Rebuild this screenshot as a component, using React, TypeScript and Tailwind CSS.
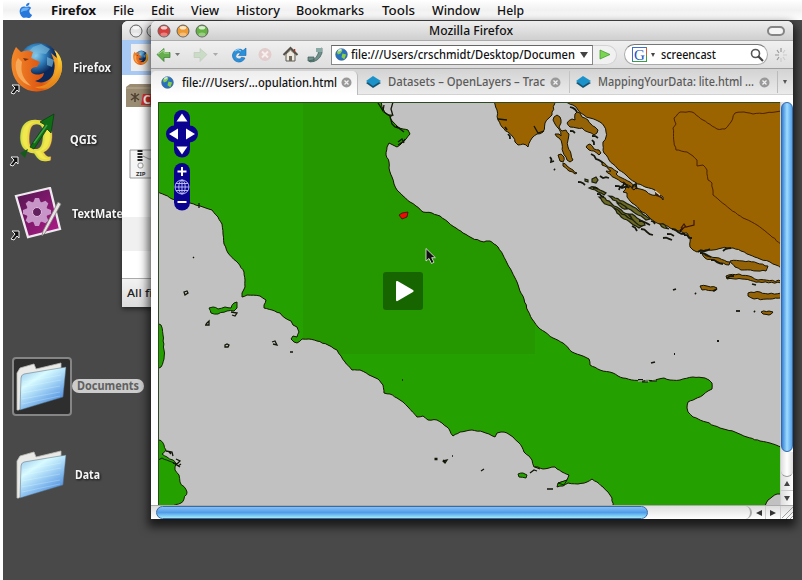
import React from "react";

type Pt = [number, number];

function rng(seed: number) {
  let s = seed;
  return () => {
    s = (s * 16807) % 2147483647;
    return s / 2147483647;
  };
}

function parse(s: string): Pt[] {
  return s.trim().split(/\s+/).map((p) => p.split(",").map(Number) as Pt);
}

// Breaks each segment into short steps with a small sideways offset, like a surveyed coastline.
function coast(s: string, amp = 0.7, closed = true): string {
  const pts = parse(s);
  const rand = rng(pts.length * 977 + Math.round(pts[0][0]));
  const out: string[] = [];
  const n = closed ? pts.length : pts.length - 1;
  for (let i = 0; i < n; i++) {
    const a = pts[i];
    const b = pts[(i + 1) % pts.length];
    const len = Math.hypot(b[0] - a[0], b[1] - a[1]);
    const straight = (a[1] >= 506 && b[1] >= 506) || (a[0] <= 157 && b[0] <= 157) || (a[1] <= 101 && b[1] <= 101) || (a[0] >= 781 && b[0] >= 781);
    const steps = straight ? 1 : Math.max(1, Math.round(len / 3));
    for (let k = 0; k < steps; k++) {
      const t = k / steps;
      const d = k === 0 ? 0 : (rand() - 0.5) * 2 * amp;
      const x = a[0] + (b[0] - a[0]) * t - ((b[1] - a[1]) / (len || 1)) * d;
      const y = a[1] + (b[1] - a[1]) * t + ((b[0] - a[0]) / (len || 1)) * d;
      out.push(`${x.toFixed(1)},${y.toFixed(1)}`);
    }
  }
  if (!closed) out.push(pts[pts.length - 1].join(","));
  return "M" + out.join("L") + (closed ? "Z" : "");
}

const ITALY = `157,192 165,195 172,199 190,203 200,206 212,210 218,217 222,224 223,234 224,244 228,253 238,263 244,272 245,280 245,287 242,293 242,297 247,295 260,296 266,300 264,305 264,308 272,310 280,313 285,318 291,321 293,325 297,327 299,332 297,337 293,336 291,339 294,342 297,343 302,339 309,339 317,341 328,345 337,350 341,356 345,362 352,370 360,370 369,375 378,379 383,385 384,393 390,394 397,398 403,402 408,407 417,417 423,416 428,420 437,420 442,423 447,427 450,431 453,436 460,432 472,430 483,432 489,434 495,437 497,433 501,432 507,433 513,437 518,442 522,447 524,452 529,456 532,460 534,467 538,467 543,469 549,468 555,467 562,472 569,475 567,480 562,482 558,483 557,487 563,486 568,483 578,484 587,482 592,479 597,482 603,487 608,492 612,498 613,506 765,506 768,500 772,497 777,494 781,494 781,447 770,443 760,441 747,437 735,432 720,428 706,422 693,417 688,412 687,408 688,402 695,399 703,395 708,391 712,389 712,383 709,380 705,378 693,377 680,380 670,380 664,378 655,380 640,381 623,378 618,376 613,373 600,370 590,365 589,359 580,355 572,352 563,343 553,338 545,332 538,327 532,319 528,311 524,299 519,288 517,282 512,272 507,263 503,255 498,247 494,244 490,241 486,241 484,242 480,241 472,238 463,233 456,228 448,222 440,216 432,213 423,212 416,206 410,202 403,196 397,190 394,184 392,177 389,168 389,162 386,155 387,147 389,143 393,145 397,147 402,143 406,139 410,134 408,130 403,129 398,127 393,122 390,118 392,115 388,115 385,113 382,107 381,101 157,101`;
const BALKANS = `563,101 568,103 573,105 578,110 584,115 590,118 596,120 600,122 604,126 606,132 606,137 603,142 604,153 609,160 617,168 626,175 635,182 645,187 655,190 656,194 660,195 663,197 663,200 659,196 652,195 646,191 640,189 633,189 631,186 626,187 623,192 627,193 627,197 632,203 642,212 648,216 655,222 663,225 670,228 679,231 687,233 690,238 690,247 693,250 697,252 705,250 713,250 722,248 733,248 741,251 750,255 760,259 770,262 776,265 781,268 781,101`;
const ISTRIA = `493,101 497,110 498,120 502,127 508,132 513,137 515,142 518,145 523,144 528,147 532,138 537,134 543,132 545,123 549,118 552,115 555,101`;
const BORDER = `781,244 770,235 757,225 743,218 730,209 713,195 712,183 708,180 707,170 703,165 697,166 697,160 693,156 687,152 676,150 674,142 673,128 676,124 674,118 680,112 692,112 703,120 717,129 725,129 731,122 735,113 744,112 753,114 766,113 781,111`;
const CROATIA_ISLANDS = [
  "554,117 557,115 560,117 561,123 559,127 562,131 566,130 569,134 568,140 568,147 571,154 573,160 570,162 567,160 563,152 562,144 559,138 555,134 559,134 561,136 559,129 555,124 553,120",
  "567,123 572,119 575,120 575,114 577,112 580,113 582,117 588,120 591,124 595,127 598,130 597,133 594,135 588,132 582,128 577,128 570,127",
  "586,147 590,144 594,149 599,150 601,153 599,155 594,151 589,150",
  "602,162 606,165 612,168 618,172 616,174 622,178 630,182 637,187 634,190 628,185 621,182 615,178 610,174 606,171 611,171 607,167 602,165",
  "558,155 561,154 564,157 563,162 560,161 559,158",
  "563,163 567,166 573,170 577,173 575,174 569,171 563,166",
  "730,261 743,261 757,263 768,266 766,271 757,271 741,270 735,267",
  "726,276 739,274 752,277 758,280 781,281 781,283 759,282 742,279 727,279",
  "748,293 760,292 768,294 781,293 781,298 767,299 754,299 748,296",
  "700,286 707,286 717,288 715,291 702,290",
  "700,252 707,256 719,258 730,262 729,265 718,262 705,258",
  "761,312 769,311 773,312 769,315 763,314",
];
const SMALL_ISLANDS = [
  "592,179 596,177 598,180 596,183 592,182", "585,179 588,180 588,182 585,181",
  "599,197 605,198 611,203 617,207 623,212 628,214 632,218 629,219 623,215 616,210 608,205 602,201",
  "609,196 615,198 623,201 630,205 638,210 646,216 650,219 646,220 638,215 631,210 622,205 613,200",
  "614,208 620,212 627,217 633,220 638,222 642,226 639,228 631,223 624,219 617,213",
  "629,214 635,216 642,221 645,225 641,226 634,221", "617,203 623,205 627,209 622,208",
  "589,188 595,187 600,190 606,193 604,195 598,192", "660,224 665,225 669,229 664,228",
];
const SLIVERS = [
  "570,107 577,112", "592,136 598,138", "592,140 594,145", "591,154 596,159 603,163",
  "570,131 575,133", "578,182 585,185", "550,157 551,162 554,161",
  "554,169 555,170", "593,188 598,189", "597,194 604,197", "615,186 622,188 628,186", "619,190 624,183 629,188", "632,188 636,184 637,189",
  "600,176 603,178 609,178", "632,226 637,231", "641,229 647,232 653,235", "639,221 650,225", "651,221 655,224",
  "663,238 672,240", "667,234 674,236", "672,229 678,232 685,234", "684,235 692,238", "680,231 683,228", "700,253 711,257",
  "711,260 723,264", "727,278 734,276", "673,290 676,289", "695,293 696,294",
  "717,289 713,291", "736,311 740,311", "754,311 755,312", "717,341 719,341", "674,354 675,354", "651,363 655,362",
  "752,284 756,285", "508,134 510,139", "505,127 507,130", "698,252 710,249", "723,251 731,248",
];

function MapView() {
  return (
    <svg className="block h-[403px] w-[622px] shrink-0" viewBox="158 102 622 403">
      <defs><clipPath id="italy"><path d={coast(ITALY, 0.45)} /></clipPath></defs>
      <rect x="158" y="102" width="622" height="403" fill="#c1c1c1" />
      <g stroke="#171400" strokeWidth="1" strokeLinejoin="round">
        <path d={coast(ITALY, 0.45)} fill="#24a000" stroke="none" />
        <path d="M303 102H535V354H303Z" fill="#269600" fillOpacity=".75" stroke="none" clipPath="url(#italy)" />
        <path d={coast(ITALY, 0.45)} fill="none" />
        <path d={coast(BALKANS, 0.8)} fill="#9b6400" />
        <path d={coast(ISTRIA, 0.8)} fill="#9b6400" />
        {CROATIA_ISLANDS.map((s, i) => <path key={i} d={coast(s, 0.8)} fill="#946207" />)}
        <path d={coast(BORDER, 0.5, false)} fill="none" stroke="#4c2100" />
      </g>
      <g fill="#6d6a25" stroke="#1c200e" strokeWidth="1.2">
        {SMALL_ISLANDS.map((s, i) => <path key={i} d={coast(s, 0.9)} />)}
      </g>
      <g stroke="#17180d" strokeWidth="1.8" fill="none">
        {SLIVERS.map((s, i) => <path key={i} d={coast(s, 1, false)} />)}
      </g>
      <path d="M641 187l6 2M655 191l5 4" stroke="#d8d8d8" strokeWidth="1.2" />
      <path d="M681 228l3-4 2 3 8-2V220M681 230l5-4M655 194l7 4" fill="none" stroke="#3c1300" strokeWidth="1.2" />
      <g fill="#24a000" stroke="#122100" strokeWidth="1">
        <path d={coast("157,323 161,325 163,335 164,350 164,359 161,367 157,369", 0.6)} />
        <path d={coast("157,441 160,440 164,445 166,450 162,454 167,457 173,460 176,464 175,470 179,475 180,482 187,492 184,499 181,503 173,506 157,506", 0.8)} />
        <path d={coast("157,462 162,458 169,461 174,463", 0.7, false)} fill="none" />
        <path d={coast("209,308 213,307 218,309 225,307 231,308 234,303 237,302 237,308 234,311 227,311 218,314 211,313", 0.7)} />
        <path d={coast("518,474 523,473 527,475 526,478 519,477", 0.4)} />
        <path d="M558 483L567 480L564 485Z" />
      </g>
      <g fill="none" stroke="#111607" strokeWidth="1.3">
        <path d="M184 292l3-1 1 2-3 2zM193 257l1 1M206 324l3-3v4h-4M225 345l2-1 2 1-1 2h-3zM272 342l3-1 2 4-4-1M290 352h3M231 312l6 1-2 3-3-1M166 451l6 1 1 4M171 454l-2-2M176 459l4 2-3 3-4-1M175 464l5 3M178 466l3-2M158 309v5M443 461l4-1-2 3-2-2M452 456h1M481 471l3-2M547 489h6M530 473l4-3 3 1M199 203v5M402 380h1M535 467l5 2" />
        <path d="M434.500 459h3M443.500 462l1-2" strokeWidth="2.600" />
        <path d="M378 103l2 3 3 5 1-6M384 112l6 4 2 8 3 3 6 2M393 102l-2 7 2 7M398 145l6-4 1-2M396 126l8 6M398 142l4-3 2 4M498 119l9 1M534 126l4 7 6-2" />
      </g>
      <path d="M638 381h4M645 381h4M652 380h4" stroke="#d6d6d6" strokeWidth="1.2" />
      <path d="M638 379.5h5M642 382h6M650 381h7" stroke="#111" strokeWidth="1" />
      <path d="M399 215l3-2 6-1-1 5-5 2z" fill="#f00a05" stroke="#351000" strokeWidth=".8" />
      <path d="M158.5 505V102.5H780" fill="none" stroke="#2d4823" />
      <g fill="#09038f">
        <rect x="174" y="110" width="16" height="47.500" rx="8" />
        <rect x="166" y="125.500" width="32" height="17" rx="8.500" />
        <rect x="174" y="163" width="16" height="47.500" rx="8" />
      </g>
      <path d="M182 113.500l5.500 8h-11zM182 154.500l5.500-8h-11zM169 134l9-5.500v11zM195 134l-9-5.500v11zM177.500 170.500h3.500v-3.500h2v3.500h3.500v2H183v3.500h-2v-3.500h-3.500zM177.500 201h9v2h-9z" fill="#fff" />
      <g fill="none" stroke="#c6c7ff" strokeWidth=".9">
        <circle cx="182" cy="187" r="7" /><ellipse cx="182" cy="187" rx="3.200" ry="7" />
        <path d="M175 187h14M182 180v14M176 183.500h12M176 190.500h12" />
      </g>
      <path d="M426 248.500v12.500l3-2.500 2.500 5 2.500-1.300-2.300-4.500h3.700z" fill="#111" stroke="#ddd" strokeWidth=".9" />
      <rect x="383" y="272" width="40" height="38" rx="3" fill="#176500" />
      <path d="M396 282q0-1.500 1.500-1L413 290q1.500 1 0 2L397.500 301q-1.500.5-1.500-1z" fill="#fff" />
    </svg>
  );
}

function Alias({ className }: { className: string }) {
  return (
    <svg className={className} width="12" height="12" viewBox="0 0 12 12">
      <path d="M3 2h7v7L8 7l-3 4-3-1 4-5z" fill="#111" stroke="#eee" strokeWidth="1" />
    </svg>
  );
}

function FirefoxIcon({ size }: { size: number }) {
  return (
    <svg width={size} height={size} viewBox="0 0 54 54">
      <defs>
        <radialGradient id="globe" cx=".4" cy=".3"><stop stopColor="#94d4ee" /><stop offset=".5" stopColor="#3182bf" /><stop offset="1" stopColor="#0b2859" /></radialGradient>
        <linearGradient id="fur"><stop stopColor="#f48a29" /><stop offset=".6" stopColor="#dc5412" /><stop offset="1" stopColor="#f7c32f" /></linearGradient>
        <linearGradient id="tail" x2=".3" y2="1"><stop stopColor="#fff08a" /><stop offset=".5" stopColor="#f6c72f" /><stop offset="1" stopColor="#e78318" /></linearGradient>
      </defs>
      <circle cx="28" cy="22" r="20" fill="url(#globe)" />
      <path d="M22 6l8-3 9 5-4 5-8-1-4 4-7-3zM36 16l7 3-2 7-5-2z" fill="#78b9da" opacity=".65" />
      <path d="M5 6l5 5c4-2 8-2 12 0l-2 6 9 4-3 5c-5 0-8 3-5 6 5 3 9 1 12 0q-1 6-9 8c8 4 18-1 19-10 2-8-1-13-3-18l6 5-2-8c11 10 9 31-7 39-17 7-33-2-36-19C0 22 0 14 5 6z" fill="url(#fur)" />
      <path d="M43 9c6 8 6 22-1 29-5 5-11 8-18 8 8 4 18 0 23-7 7-10 5-24-4-30z" fill="url(#tail)" />
      <path d="M5 21c-2 10 4 21 15 24-8-7-11-14-9-24l-4-4z" fill="#f7a95a" />
      <path d="M12 17l6 1-4 2z" fill="#76330b" />
    </svg>
  );
}

function QgisIcon() {
  return (
    <svg width="48" height="54" viewBox="0 0 48 54" className="overflow-visible">
      <text x="3" y="39" fontSize="47" fontWeight="700" textLength="34" lengthAdjust="spacingAndGlyphs" transform="rotate(4 20 25)" fill="#f0e84d" stroke="#e3da43" strokeWidth="2" className="font-['Liberation_Serif']">Q</text>
      <path d="M14 34L29 12l-5-3L38 1l-3 19-4-4L18 36z" fill="#106d16" stroke="#0a3d10" strokeWidth=".8" />
      <path d="M18 30L31 12" stroke="#3fa342" strokeWidth="1.500" />
      <path d="M4 40l8-4-3 9z" fill="#145a18" />
    </svg>
  );
}

function TextMateIcon() {
  return (
    <svg width="50" height="52" viewBox="0 0 50 52">
      <defs><linearGradient id="plum" x2="1" y2="1"><stop stopColor="#4f164e" /><stop offset="1" stopColor="#b31c8b" /></linearGradient></defs>
      <path d="M2 9L36 1l10 41-32 8z" fill="url(#plum)" stroke="#eee8ef" strokeWidth="2.300" />
      <g transform="translate(23 25)" fill="#c795c7">
        {[0, 45, 90, 135, 180, 225, 270, 315].map((a) => <path key={a} d="M-4-9l2-5h4l2 5z" transform={`rotate(${a})`} />)}
        <circle r="10.500" /><circle r="4.500" fill="#63205e" stroke="#e4bbe2" />
      </g>
      <path d="M44 15l3 2-16 29-3 3 1-5z" fill="#e6e3e2" stroke="#807a7b" strokeWidth=".8" />
    </svg>
  );
}

function FolderIcon() {
  return (
    <svg width="52" height="52" viewBox="0 0 52 52">
      <defs><linearGradient id="folder" x2=".7" y2="1"><stop stopColor="#8abbe8" /><stop offset=".35" stopColor="#d8fbff" /><stop offset=".65" stopColor="#92c6f2" /><stop offset="1" stopColor="#4284db" /></linearGradient></defs>
      <path d="M1 12l3-5 14-4 2 5 25-6v8L3 49H1z" fill="#e9e9e7" stroke="#babab8" strokeWidth=".8" />
      <path d="M5 17q0-3 3-4L50 6l-3 30L4 49z" fill="url(#folder)" stroke="#536774" strokeWidth=".5" />
      <path d="M7 21l38-7M7 26l38-7M6 32l38-7M6 38l38-7M6 43l38-8" stroke="#ebffff" opacity=".25" />
    </svg>
  );
}

function Globe() {
  return (
    <svg width="13" height="13" viewBox="0 0 14 14" className="shrink-0">
      <circle cx="7" cy="7" r="6.300" fill="#2872bd" stroke="#496683" strokeWidth=".7" />
      <path d="M2 4l4-3 2 2-2 3-3 1zM8 6l4 1-2 5-3-2z" fill="#8bcf45" /><path d="M3 2l3-1 2 1-4 2z" fill="#c7e9f6" />
    </svg>
  );
}

function Trac() {
  return (
    <svg width="15" height="13" viewBox="0 0 15 13" className="shrink-0">
      <path d="M0 7l7-4 8 4-8 5z" fill="#17516f" /><path d="M0 5l7-5 8 5-8 5z" fill="#1b93ca" />
    </svg>
  );
}

function CloseTab() {
  return (
    <svg width="11" height="11" viewBox="0 0 11 11" className="shrink-0"><circle cx="5.500" cy="5.500" r="5" fill="#999" /><path d="M3.500 3.500l4 4m0-4l-4 4" stroke="#f2f2f2" strokeWidth="1.300" /></svg>
  );
}

function Light({ color }: { color: string }) {
  return (
    <svg width="14" height="14" viewBox="0 0 14 14" className="block">
      <circle cx="7" cy="7" r="6" fill={color} stroke="#606060" strokeWidth="1" />
      <ellipse cx="7" cy="3.700" rx="3.300" ry="1.800" fill="#fff" opacity=".75" /><ellipse cx="7" cy="10.500" rx="3.500" ry="2" fill="#fff" opacity=".35" />
    </svg>
  );
}

// Keeps a label at its own column width, whatever the font's advance widths.
function Label({ text, width, size, bold, color = "#111", shadow }: { text: string; width: number; size: number; bold?: boolean; color?: string; shadow?: boolean }) {
  return (
    <svg width={width} height="18" className={shadow ? "block shrink-0 overflow-visible drop-shadow-[1px_1px_1px_#111]" : "block shrink-0 overflow-visible"}>
      <text x="0" y="13" textLength={width} lengthAdjust="spacingAndGlyphs" fontSize={size} fontWeight={bold ? 700 : 500} fill={color} className="font-['Noto_Sans','Open_Sans',sans-serif]">{text}</text>
    </svg>
  );
}

const MENU: [string, number, number][] = [["Firefox", 45, 62], ["File", 21, 38], ["Edit", 23, 40], ["View", 28, 45], ["History", 44, 60], ["Bookmarks", 68, 86], ["Tools", 33, 50], ["Window", 48, 65], ["Help", 27, 40]];

function Toolbar() {
  return (
    <div className="flex h-[28px] shrink-0 items-center border-t border-[#ababab] bg-gradient-to-b from-[#f0f0f0] to-[#dedede]">
      <svg width="180" height="27" viewBox="151 41 180 27" className="shrink-0">
        <path d="M157 54.500l7-6v4h6v5h-6v4z" fill="#65ae4d" stroke="#35782d" strokeWidth=".7" /><path d="M158 54l6-4v3h5" fill="none" stroke="#b0df99" />
        <path d="M175 53h5l-2.500 3z" fill="#777" /><path d="M213 53h5l-2.500 3z" fill="#aaa" />
        <path d="M207 54.500l-7-6v4h-6v5h6v4z" fill="#cbdcc6" stroke="#b4c2b0" strokeWidth=".5" />
        <path d="M243 50.500a6.500 6.500 0 1 0 2 7.500l-3.500-.8a3 3 0 1 1-1-3.700l-2 2h7.500V48z" fill="#2991dc" stroke="#1b64a9" strokeWidth=".6" />
        <path d="M235 51q3-3 6 0" stroke="#9bdcff" fill="none" />
        <circle cx="265" cy="54.500" r="6.500" fill="#e2cccc" /><path d="M262 51.500l6 6m0-6l-6 6" stroke="#f7eeee" strokeWidth="2" />
        <path d="M283.500 55l7-7 7 7" fill="none" stroke="#565048" strokeWidth="2" /><path d="M286 54l4.500-4 4.500 4v7h-9z" fill="#eeeadf" stroke="#615d54" /><path d="M289 56h3v5h-3z" fill="#70685a" /><path d="M294.500 49v3" stroke="#983c2d" strokeWidth="1.500" />
        <path d="M309 61q9-1 10-12l3-1v5q-3 9-12 9zM308 57h6v4h-6z" fill="#70908b" stroke="#3e5d58" strokeWidth=".7" /><path d="M316 48h6v4h-6z" fill="#8aaba5" />
      </svg>
      <div className="flex h-[20px] w-[262px] shrink-0 items-center border border-[#888] border-t-[#666] bg-white pl-[3px]">
        <Globe /><div className="w-[3px] shrink-0" />
        <Label text="file:///Users/crschmidt/Desktop/Documen" width={224} size={12} />
        <span className="ml-[5px] h-0 w-0 shrink-0 border-x-4 border-t-[6px] border-x-transparent border-t-[#444]" />
      </div>
      <div className="flex h-[20px] w-[24px] shrink-0 items-center justify-center rounded-r-full border border-l-0 border-[#d3d3d3] bg-[#f1f1f1]">
        <svg width="12" height="11" viewBox="0 0 12 11"><path d="M1 1l10 4.500L1 10z" fill="#7bd552" stroke="#369425" strokeWidth=".7" /></svg>
      </div>
      <div className="ml-[7px] flex h-[21px] w-[144px] shrink-0 items-center rounded-full border border-[#aaa] border-t-[#777] bg-white pl-[7px]">
        <svg width="15" height="15" viewBox="0 0 15 15" className="shrink-0"><rect x=".5" y=".5" width="14" height="14" fill="#fff" stroke="#36a042" /><path d="M.5 14V.5H14" fill="none" stroke="#426ccd" /><path d="M14.500 1v7" stroke="#dd5336" /><text x="2" y="12.500" fontSize="15" fill="#2154c3" className="font-['Liberation_Serif']">G</text></svg>
        <span className="mx-[4px] h-0 w-0 border-x-2 border-t-4 border-x-transparent border-t-[#444]" />
        <div className="w-[2px]" />
        <Label text="screencast" width={55} size={12} />
        <svg width="14" height="14" viewBox="0 0 14 14" className="ml-[34px] shrink-0"><circle cx="5.500" cy="5.500" r="4" fill="none" stroke="#555" strokeWidth="1.600" /><path d="M8 8l5 5" stroke="#444" strokeWidth="2.200" /></svg>
      </div>
      <svg width="18" height="20" viewBox="0 0 18 20" className="ml-[4px] shrink-0"><path d="M9 3v4M5 5l2 3M3 10h4M5 15l2-3" stroke="#999" strokeWidth="1.200" /><path d="M9 17v-4M13 15l-2-3M13 5l-2 3M15 10h-4" stroke="#ccc" strokeWidth="1.200" /></svg>
    </div>
  );
}

function Browser() {
  return (
    <section className="absolute left-[148px] top-[21px] flex h-[498px] w-[642px] flex-col overflow-hidden rounded-t-[6px] bg-white shadow-[0_5px_10px_3px_rgba(0,0,0,.65)]">
      <div className="flex h-[19px] shrink-0 items-center bg-gradient-to-b from-[#eeeeee] to-[#cfcfcf] pl-[6px]">
        <div className="flex gap-[5px]"><Light color="#d73e3b" /><Light color="#ee9a32" /><Light color="#63b342" /></div>
        <div className="ml-[220px]"><Label text="Mozilla Firefox" width={84} size={12} /></div>
        <div className="ml-auto mr-[8px] h-[10px] w-[18px] rounded-full border-2 border-[#858585] bg-[#f4f4f4]" />
      </div>
      <Toolbar />
      <div className="flex h-[27px] shrink-0 items-center border-y border-t-[#9d9d9d] border-b-[#d2d2d2] bg-gradient-to-b from-[#d3d3d3] to-[#ebebeb]">
        <div className="mt-[2px] flex h-[24px] w-[207px] shrink-0 items-center rounded-t-[5px] border-r border-[#bbb] bg-gradient-to-b from-[#ededed] to-white pl-[10px]">
          <Globe /><div className="w-[8px]" /><Label text="file:///Users/...opulation.html" width={155} size={12} /><div className="w-[4px]" /><CloseTab />
        </div>
        <div className="mt-[1px] flex h-[22px] w-[212px] shrink-0 items-center border-r border-[#c4c4c4] pl-[8px]">
          <Trac /><div className="w-[7px]" /><Label text="Datasets – OpenLayers – Trac" width={157} size={12} color="#5a5a5a" /><div className="w-[5px]" /><CloseTab />
        </div>
        <div className="mt-[1px] flex h-[22px] w-[208px] shrink-0 items-center border-r border-[#bbb] pl-[6px]">
          <Trac /><div className="w-[7px]" /><Label text="MappingYourData: lite.html ..." width={156} size={12} color="#5a5a5a" /><div className="w-[5px]" /><CloseTab />
        </div>
        <span className="ml-[5px] h-0 w-0 border-x-2 border-t-4 border-x-transparent border-t-[#555]" />
      </div>
      <div className="h-[7px] shrink-0 bg-white" />
      <div className="flex h-[403px] shrink-0">
        <div className="w-[7px] shrink-0 bg-white" />
        <MapView />
        <div className="flex w-[13px] shrink-0 flex-col border-l border-[#ccc] bg-gradient-to-r from-[#dedede] to-white">
          <div className="h-[350px] rounded-full border border-[#3169ac] bg-gradient-to-r from-[#367fd3] via-[#9edcff] to-[#529eea]" />
          <div className="h-[25px] rounded-b-full border-b border-[#999] bg-gradient-to-r from-[#dedede] via-white to-[#ddd]" />
          <div className="flex h-[14px] items-center justify-center border-b border-[#ccc]"><span className="h-0 w-0 border-x-[3px] border-b-[5px] border-x-transparent border-b-[#444]" /></div>
          <div className="flex h-[14px] items-center justify-center"><span className="h-0 w-0 border-x-[3px] border-t-[5px] border-x-transparent border-t-[#444]" /></div>
        </div>
      </div>
      <div className="flex h-[14px] shrink-0 border-t border-[#aaa] bg-gradient-to-b from-[#dcdcdc] to-white pl-[5px]">
        <div className="h-[13px] w-[492px] shrink-0 rounded-full border border-[#3a6aa4] bg-gradient-to-b from-[#86bff4] via-[#509ce9] to-[#a0eafa]" />
        <div className="h-[13px] w-[104px] shrink-0 rounded-r-full border-r-2 border-[#aaa] bg-gradient-to-b from-[#dedede] to-white" />
        <div className="flex w-[14px] shrink-0 items-center justify-center border-r border-[#ccc]"><span className="h-0 w-0 border-y-[3px] border-r-[6px] border-y-transparent border-r-[#333]" /></div>
        <div className="flex w-[15px] shrink-0 items-center justify-center border-r border-[#ccc]"><span className="h-0 w-0 border-y-[3px] border-l-[6px] border-y-transparent border-l-[#333]" /></div>
        <svg width="12" height="13" viewBox="0 0 12 13" className="shrink-0"><path d="M1 12L12 1M5 13l7-7M9 13l3-3" stroke="#888" strokeWidth=".8" /></svg>
      </div>
    </section>
  );
}

export default function App() {
  return (
    <main className="relative h-[580px] w-[802px] overflow-hidden border-l-[3px] border-white bg-[#494949]">
      <header className="flex h-[20px] items-center bg-gradient-to-b from-white via-[#f1f1f1] to-white pt-[1px]">
        <svg width="14" height="17" viewBox="0 0 16 18" className="ml-[16px] mr-[18px] shrink-0">
          <path d="M8 5c2-1 4-1 6 1-3 2-3 6 1 8-2 4-4 4-7 3-3 1-5 0-7-5C0 7 3 3 8 5zM8 4c0-3 2-4 4-4 0 3-2 4-4 4z" fill="#2878dc" />
          <path d="M3 7q4-2 9-1l-3 3q-4 0-7 2z" fill="#68b1f6" />
        </svg>
        {MENU.map(([t, w, c], i) => <div key={t} className="shrink-0" style={{ width: c }}><Label text={t} width={w} size={13} bold={i === 0} /></div>)}
      </header>

      <div className="absolute left-[8px] top-[41px]"><FirefoxIcon size={54} /></div><Alias className="absolute left-[6px] top-[83px]" />
      <div className="absolute left-[70px] top-[59px]"><Label text="Firefox" width={38} size={12} bold color="#f5f5f5" shadow /></div>
      <div className="absolute left-[13px] top-[113px]"><QgisIcon /></div><Alias className="absolute left-[5px] top-[155px]" />
      <div className="absolute left-[67px] top-[131px]"><Label text="QGIS" width={27} size={12} bold color="#f5f5f5" shadow /></div>
      <div className="absolute left-[11px] top-[187px]"><TextMateIcon /></div><Alias className="absolute left-[6px] top-[229px]" />
      <div className="absolute left-[69px] top-[205px]"><Label text="TextMate" width={51} size={12} bold color="#f5f5f5" shadow /></div>
      <div className="absolute left-[9px] top-[357px] flex h-[59px] w-[60px] items-center justify-center rounded-[4px] border-2 border-[#858585] bg-[#2e2e2e]"><FolderIcon /></div>
      <div className="absolute left-[69px] top-[379px] flex h-[14px] w-[72px] items-center justify-center rounded-full bg-[#ccc]"><Label text="Documents" width={62} size={12} bold color="#606060" /></div>
      <div className="absolute left-[13px] top-[449px]"><FolderIcon /></div>
      <div className="absolute left-[72px] top-[466px]"><Label text="Data" width={25} size={12} bold color="#f5f5f5" shadow /></div>

      <section className="absolute left-[119px] top-[21px] flex h-[286px] w-[100px] flex-col overflow-hidden rounded-tl-[6px] bg-white shadow-[0_2px_5px_rgba(0,0,0,.55)]">
        <div className="flex h-[19px] shrink-0 items-center gap-[3px] bg-gradient-to-b from-[#f2f2f2] to-[#dcdcdc] pl-[7px]"><Light color="#e5e5e5" /><Light color="#e5e5e5" /></div>
        <div className="h-[35px] shrink-0 bg-[#a7c9f4] pl-[9px] pt-[4px]"><div className="h-[27px] w-[25px] bg-[#eee] pl-[2px] pt-[6px]"><FirefoxIcon size={16} /></div></div>
        <div className="h-[34px] shrink-0 pl-[4px] pt-[9px]">
          <svg width="30" height="24" viewBox="0 0 30 24"><path d="M0 3l4-3h26v23H0z" fill="#9a8b73" /><path d="M0 4h30" stroke="#beb096" /><path d="M5 10l8 6m0-6l-8 6M9 9v9" stroke="#4f4132" strokeWidth="1.500" /><path d="M17 10h13v11H15z" fill="#d92d25" /><text x="17" y="20" fontSize="12" fontWeight="700" fill="#fff" className="font-['Noto_Sans']">C</text></svg>
        </div>
        <div className="h-[108px] shrink-0 pl-[7px] pt-[40px]">
          <svg width="28" height="30" viewBox="0 0 28 30"><path d="M1 1h26v28H1z" fill="#f5f5f5" stroke="#999" /><path d="M11 1v11" stroke="#222" strokeWidth="5" strokeDasharray="2 1" /><path d="M14 7l6 3h5" fill="none" stroke="#999" /><rect x="9" y="14" width="5" height="5" rx="2" fill="#fff" stroke="#999" /><text x="7" y="27" fontSize="6" fontWeight="700" fill="#333" className="font-['Noto_Sans']">ZIP</text></svg>
        </div>
        <div className="h-[34px] shrink-0 bg-[#f0f0f0]" />
        <div className="h-[27px] shrink-0 bg-white" />
        <div className="flex h-[29px] shrink-0 items-center border-t border-[#aaa] bg-gradient-to-b from-[#f2f2f2] to-[#dcdcdc] pl-[5px]"><Label text="All files" width={42} size={11} color="#222" /></div>
      </section>
      <Browser />
    </main>
  );
}
